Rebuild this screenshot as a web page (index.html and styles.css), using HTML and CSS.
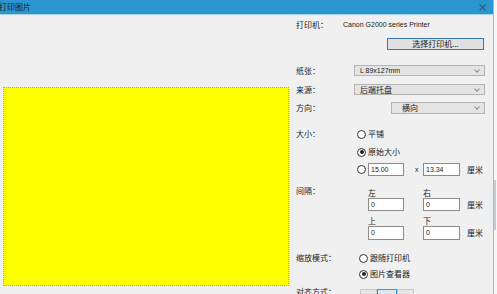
FILE: index.html
```html
<!DOCTYPE html>
<html lang="zh-CN">
<head>
    <meta charset="UTF-8">
    <meta name="viewport" content="width=device-width, initial-scale=1.0">
    <title>打印图片</title>
    <link rel="stylesheet" href="styles.css">
</head>
<body>

<div class="window">
    <div class="titlebar">
        <span class="title">打印图片</span>
        <svg class="close" width="7" height="7" viewBox="0 0 7 7"><path d="M0.5 0.5L6.5 6.5M6.5 0.5L0.5 6.5" stroke="#2f5f80" stroke-width="1.1"/></svg>
    </div>

    <div class="content">
        <div class="preview">
            <div class="paper"></div>
        </div>

        <div class="panel">
            <div class="row row-printer">
                <span class="label label-short">打印机：</span>
                <span class="latin">Canon G2000 series Printer</span>
            </div>
            <div class="row row-button">
                <div class="btn-printer">选择打印机...</div>
            </div>

            <div class="row row-paper">
                <span class="label">纸张：</span>
                <div class="select"><span class="latin">L 89x127mm</span><span class="chev"></span></div>
            </div>
            <div class="row row-source">
                <span class="label">来源：</span>
                <div class="select"><span>后端托盘</span><span class="chev"></span></div>
            </div>
            <div class="row row-orient">
                <span class="label">方向：</span>
                <div class="select select-small"><span>横向</span><span class="chev"></span></div>
            </div>

            <div class="row row-size">
                <span class="label">大小：</span>
                <span class="radio"></span><span>平铺</span>
            </div>
            <div class="row row-radio">
                <span class="label"></span>
                <span class="radio checked"></span><span>原始大小</span>
            </div>
            <div class="row row-custom">
                <span class="label"></span>
                <span class="radio"></span>
                <span class="input latin">15.00</span>
                <span class="times latin">x</span>
                <span class="input input-wide latin">13.34</span>
                <span class="unit">厘米</span>
            </div>

            <div class="row row-spacing">
                <span class="label">间隔：</span>
                <div class="spacing">
                    <span class="side">左</span>
                    <span class="side">右</span>
                    <span></span>
                    <span class="input latin">0</span>
                    <span class="input input-wide latin">0</span>
                    <span class="unit">厘米</span>
                    <span class="side">上</span>
                    <span class="side">下</span>
                    <span></span>
                    <span class="input latin">0</span>
                    <span class="input input-wide latin">0</span>
                    <span class="unit">厘米</span>
                </div>
            </div>

            <div class="row row-scale">
                <span class="label">缩放模式：</span>
                <span class="radio radio-far"></span><span>跟随打印机</span>
            </div>
            <div class="row row-radio2">
                <span class="label"></span>
                <span class="radio radio-far checked"></span><span>图片查看器</span>
            </div>

            <div class="row row-align">
                <span class="label label-cut">对齐方式：</span>
                <div class="segments">
                    <span class="seg"></span>
                    <span class="seg seg-active"></span>
                    <span class="seg"></span>
                </div>
            </div>
        </div>
    </div>
</div>

<div class="edge">
    <div class="edge-thumb"></div>
</div>

</body>
</html>
```

FILE: styles.css
```css
body {
    margin: 0;
    padding: 0;
    display: flex;
    height: 294px;
    overflow: hidden;
    background-color: #f7f7f7;
    font-family: "Noto Sans CJK SC", sans-serif;
    font-size: 8px;
    line-height: 12px;
    color: #1a1a1a;
}
.window {
    width: 493px;
    height: 294px;
    border-right: 1px solid #93bfdc;
    background-color: #f0f0f0;
    overflow: hidden;
}
.titlebar {
    height: 14px;
    background-color: #2a95ce;
    border-bottom: 1px solid #a9d2ec;
    display: flex;
    align-items: center;
}
.title {
    margin-left: -1px;
    line-height: 14px;
}
.close {
    margin-left: auto;
    margin-right: 7px;
}
.content {
    display: flex;
}
.preview {
    width: 296px;
    flex: none;
}
.paper {
    margin-top: 72px;
    margin-left: 3px;
    width: 286px;
    height: 199px;
    box-sizing: border-box;
    background-color: #ffff00;
    border: 1px dotted #a9a9a0;
}
.panel {
    flex: 1;
    padding-right: 8px;
    display: flex;
    flex-direction: column;
}
.row {
    display: flex;
    align-items: center;
    height: 12px;
}
.label {
    width: 58px;
    flex: none;
}
.label-short {
    width: 47px;
}
.latin {
    font-family: "Liberation Sans", Arial, sans-serif;
    font-size: 7px;
}
.row-printer {
    margin-top: 4px;
}
.row-button {
    margin-top: 7px;
    height: 12px;
}
.btn-printer {
    margin-left: auto;
    margin-right: 1px;
    width: 97px;
    height: 12px;
    box-sizing: border-box;
    border: 1px solid #3a78b4;
    background-color: #e1e1e1;
    display: flex;
    align-items: center;
    justify-content: center;
    line-height: 10px;
}
.select {
    flex: 1;
    height: 11px;
    box-sizing: border-box;
    border: 1px solid #b4b4b4;
    background-color: #e4e4e4;
    display: flex;
    align-items: center;
    padding-left: 5px;
    padding-right: 5px;
}
.select-small {
    flex: none;
    width: 94px;
    height: 12px;
    margin-left: auto;
    padding-left: 10px;
}
.chev {
    margin-left: auto;
    width: 3px;
    height: 3px;
    border-right: 1px solid #8a8a8a;
    border-bottom: 1px solid #8a8a8a;
    transform: rotate(45deg);
    margin-bottom: 2px;
}
.row-paper {
    margin-top: 15px;
    height: 11px;
}
.row-source {
    margin-top: 8px;
    height: 11px;
}
.row-orient {
    margin-top: 7px;
}
.row-size {
    margin-top: 14px;
}
.row-radio {
    margin-top: 6px;
}
.radio {
    flex: none;
    width: 9px;
    height: 9px;
    box-sizing: border-box;
    margin-left: 3px;
    margin-right: 2px;
    border: 1px solid #333;
    border-radius: 50%;
    background-color: #fff;
    display: flex;
    align-items: center;
    justify-content: center;
}
.radio.checked::after {
    content: "";
    width: 4px;
    height: 4px;
    border-radius: 50%;
    background-color: #222;
}
.radio-far {
    margin-left: 5px;
}
.row-custom {
    margin-top: 5px;
    height: 13px;
}
.input {
    flex: none;
    width: 36px;
    height: 13px;
    box-sizing: border-box;
    border: 1px solid #8c8c8c;
    background-color: #fff;
    padding-left: 2px;
    line-height: 11px;
}
.input-wide {
    width: 37px;
}
.times {
    width: 19px;
    padding-left: 11px;
    box-sizing: border-box;
}
.unit {
    margin-left: 7px;
}
.row-spacing {
    margin-top: 10px;
    height: auto;
    align-items: flex-start;
}
.row-spacing .label {
    line-height: 10px;
}
.spacing {
    margin-left: 14px;
    display: grid;
    grid-template-columns: 36px 37px auto;
    grid-template-rows: 12px 13px 15px 14px;
    column-gap: 19px;
    align-items: center;
}
.spacing .unit {
    margin-left: -12px;
}
.spacing .input {
    height: 100%;
}
.side {
    align-self: end;
    line-height: 10px;
}
.row-scale {
    margin-top: 12px;
}
.row-radio2 {
    margin-top: 4px;
}
.row-align {
    margin-top: 7px;
    align-items: flex-start;
}
.label-cut {
    line-height: 10px;
}
.segments {
    display: flex;
    margin-top: 2px;
    margin-left: 6px;
}
.seg {
    width: 17px;
    height: 12px;
    box-sizing: border-box;
    border: 1px solid #c8c8c8;
    background-color: #e6e6e6;
}
.seg-active {
    width: 20px;
    border-color: #3c8fd9;
    background-color: #dbe9f6;
}
.edge {
    flex: 1;
    display: flex;
    flex-direction: column;
}
.edge-thumb {
    margin-top: 180px;
    height: 50px;
    width: 2px;
    background-color: #c4cdd3;
}
```
